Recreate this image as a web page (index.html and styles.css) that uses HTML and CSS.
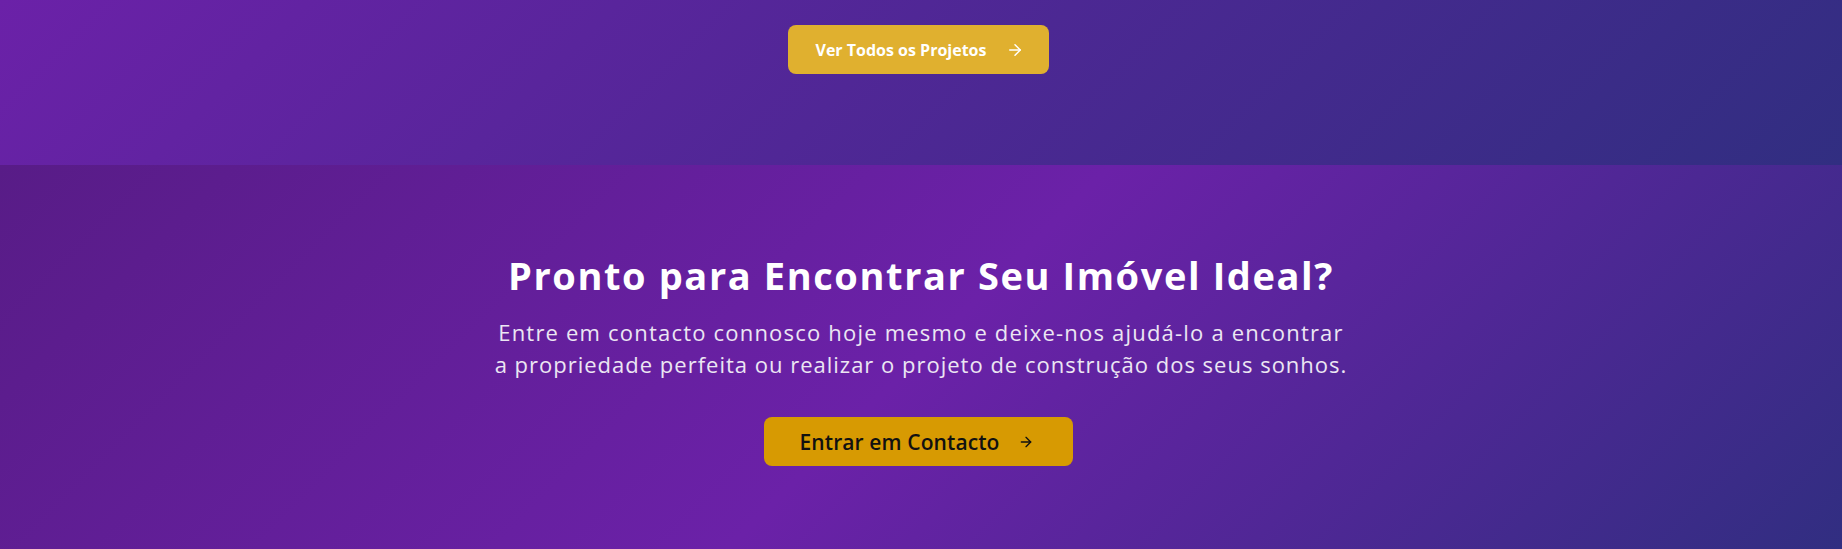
FILE: index.html
```html
<!DOCTYPE html>
<html lang="pt">
<head>
<meta charset="utf-8">
<title>Imóveis</title>
<link rel="stylesheet" href="styles.css">
</head>
<body>
<section class="projects-end">
  <a class="btn btn-gold" href="#">
    <span>Ver Todos os Projetos</span>
    <svg class="arrow" viewBox="0 0 24 24" width="18" height="18" fill="none" stroke="currentColor" stroke-width="2" stroke-linecap="round" stroke-linejoin="round"><path d="M5 12h14"/><path d="m12 5 7 7-7 7"/></svg>
  </a>
</section>
<section class="cta">
  <h2 class="cta-title">Pronto para Encontrar Seu Imóvel Ideal?</h2>
  <p class="cta-text"><span class="line-one">Entre em contacto connosco hoje mesmo e deixe-nos ajudá-lo a encontrar</span><br>a propriedade perfeita ou realizar o projeto de construção dos seus sonhos.</p>
  <a class="btn btn-amber" href="#">
    <span>Entrar em Contacto</span>
    <svg class="arrow" viewBox="0 0 24 24" width="16" height="16" fill="none" stroke="currentColor" stroke-width="2" stroke-linecap="round" stroke-linejoin="round"><path d="M5 12h14"/><path d="m12 5 7 7-7 7"/></svg>
  </a>
</section>
</body>
</html>
```

FILE: styles.css
```css
* { box-sizing: border-box; }
html, body { margin: 0; padding: 0; }
body {
  font-family: "Open Sans", "Liberation Sans", sans-serif;
  width: 1842px;
  height: 549px;
  overflow: hidden;
}
.projects-end {
  height: 165px;
  background: linear-gradient(135deg, #6b21a8 0%, #312e81 100%);
  display: flex;
  justify-content: center;
  align-items: flex-start;
  padding-top: 25px;
}
.btn {
  display: inline-flex;
  align-items: center;
  height: 49px;
  border-radius: 8px;
  text-decoration: none;
}
.btn-gold {
  width: 261px;
  padding: 0 0 0 28px;
  background: #e0b02f;
  color: #ffffff;
  font-weight: 700;
  font-size: 16px;
  gap: 20px;
  margin-left: -6px;
}
.btn-amber {
  width: 309px;
  padding: 0 0 0 36px;
  background: #d79a02;
  color: #111111;
  font-weight: 600;
  font-size: 21px;
  letter-spacing: 0.1px;
  gap: 18px;
  margin-left: -6px;
}
.cta {
  height: 384px;
  background: linear-gradient(135deg, #581c87 0%, #6b21a8 50%, #312e81 100%);
  display: flex;
  flex-direction: column;
  align-items: center;
  padding-top: 90px;
  text-align: center;
}
.cta-title {
  margin: 0 0 21px;
  color: #ffffff;
  font-size: 38px;
  line-height: 40px;
  font-weight: 700;
  letter-spacing: 1.6px;
}
.cta-text {
  margin: 0 0 37px;
  max-width: 920px;
  color: #ece6f3;
  font-size: 22px;
  line-height: 32px;
  letter-spacing: 1px;
}
.line-one {
  letter-spacing: 1.2px;
}
```
